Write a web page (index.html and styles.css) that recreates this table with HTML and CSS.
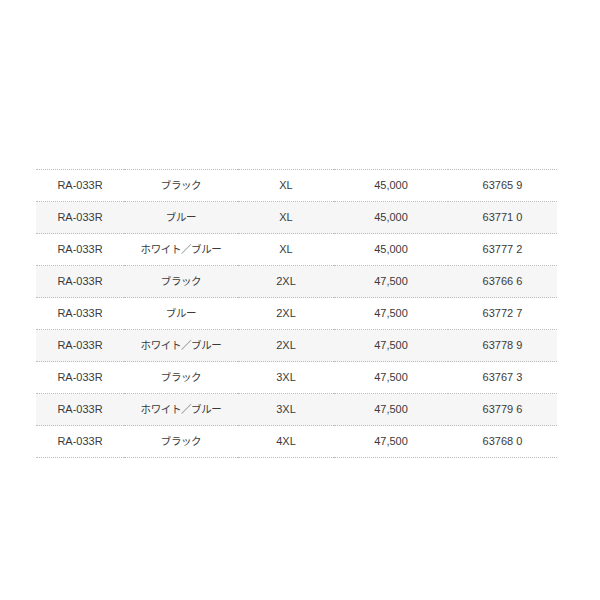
FILE: index.html
```html
<!DOCTYPE html>
<html lang="ja">
<head>
<meta charset="utf-8">
<link rel="stylesheet" href="styles.css">
</head>
<body>
<div class="page">
<table class="spec">
<colgroup><col class="c1"><col class="c2"><col class="c3"><col class="c4"><col class="c5"></colgroup>
<tbody>
<tr><td>RA-033R</td><td class="jp">ブラック</td><td>XL</td><td>45,000</td><td>63765 9</td></tr>
<tr><td>RA-033R</td><td class="jp">ブルー</td><td>XL</td><td>45,000</td><td>63771 0</td></tr>
<tr><td>RA-033R</td><td class="jp">ホワイト／ブルー</td><td>XL</td><td>45,000</td><td>63777 2</td></tr>
<tr><td>RA-033R</td><td class="jp">ブラック</td><td>2XL</td><td>47,500</td><td>63766 6</td></tr>
<tr><td>RA-033R</td><td class="jp">ブルー</td><td>2XL</td><td>47,500</td><td>63772 7</td></tr>
<tr><td>RA-033R</td><td class="jp">ホワイト／ブルー</td><td>2XL</td><td>47,500</td><td>63778 9</td></tr>
<tr><td>RA-033R</td><td class="jp">ブラック</td><td>3XL</td><td>47,500</td><td>63767 3</td></tr>
<tr><td>RA-033R</td><td class="jp">ホワイト／ブルー</td><td>3XL</td><td>47,500</td><td>63779 6</td></tr>
<tr><td>RA-033R</td><td class="jp">ブラック</td><td>4XL</td><td>47,500</td><td>63768 0</td></tr>
</tbody>
</table>
</div>
</body>
</html>
```
FILE: styles.css
```css
html, body { margin: 0; padding: 0; background: #fff; }
.page { padding: 169px 43px 0 36px; }
.spec {
  width: 521px;
  border-collapse: collapse;
  table-layout: fixed;
  font-family: "Liberation Sans", "Noto Sans CJK JP", sans-serif;
  font-size: 11px;
  color: #3a3a3a;
}
.c1 { width: 88px; }
.c2 { width: 114px; }
.c3 { width: 96px; }
.c4 { width: 114px; }
.c5 { width: 109px; }
.spec tr { border-top: 1px dotted #bbb; border-bottom: 1px dotted #bbb; }
.spec tr:nth-child(even) { background: #f6f6f6; }
.spec td { height: 31px; padding: 0; text-align: center; vertical-align: middle; line-height: 13px; }
.spec td.jp { font-size: 10.5px; letter-spacing: -0.4px; }
```
